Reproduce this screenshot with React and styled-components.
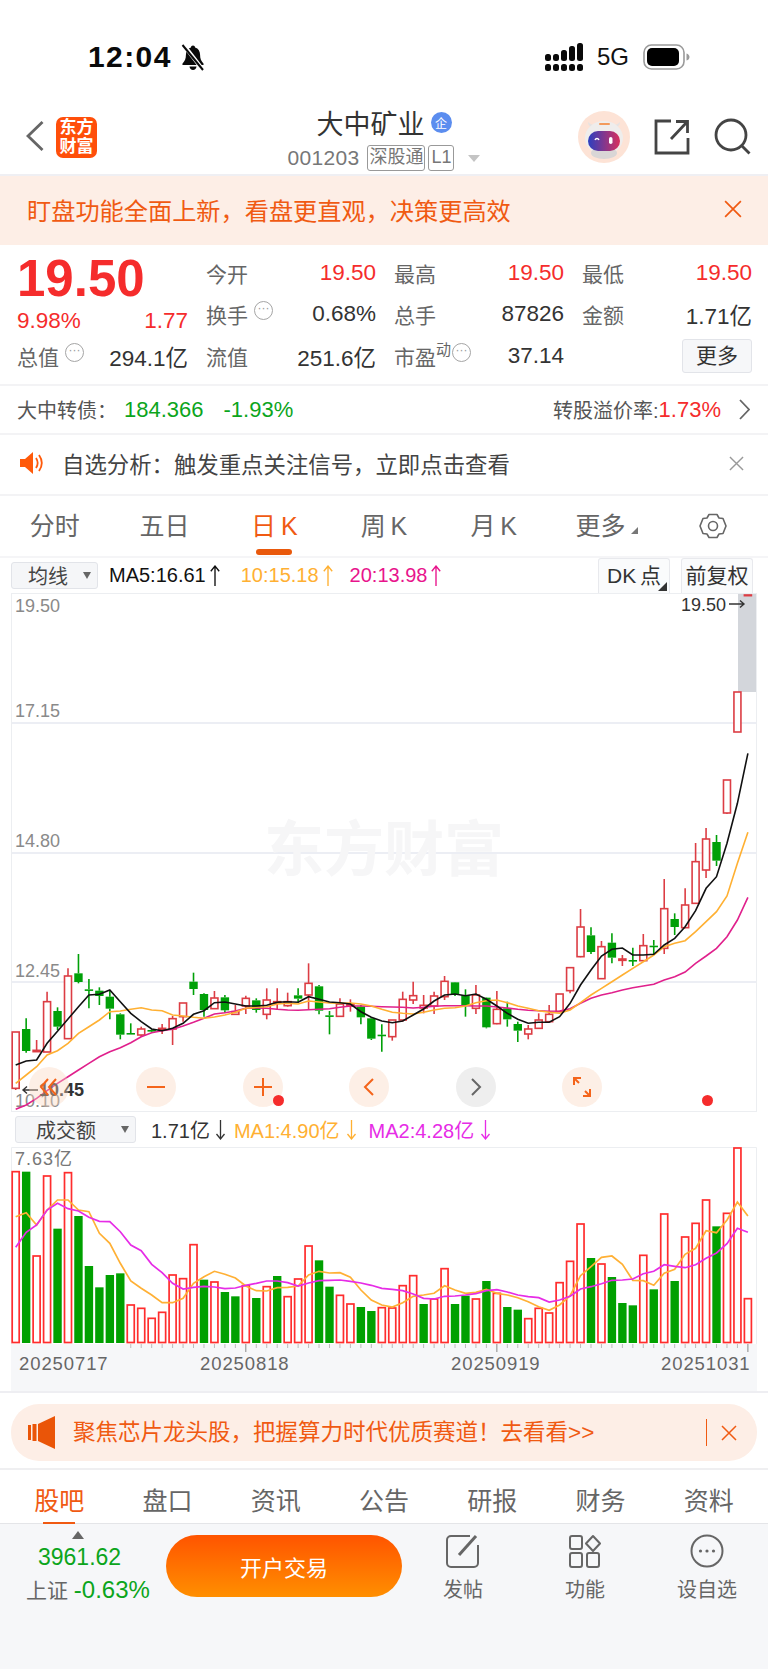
import React from 'react'
import styled, { createGlobalStyle } from 'styled-components'

const SANS = '"Liberation Sans", "Noto Sans CJK SC", sans-serif'
const RED = '#f52c2c'
const GREEN = '#0ca51c'
const ORANGE = '#f05a12'

const GlobalStyle = createGlobalStyle`
  html, body { margin: 0; padding: 0; background: #fff; }
  body { font-family: ${SANS}; width: 768px; height: 1669px; overflow: hidden; color: #333; }
  * { box-sizing: border-box; }
`

const Page = styled.div`
  width: 768px;
  height: 1669px;
  display: flex;
  flex-direction: column;
`

const StatusBar = styled.div`
  height: 104px;
  flex: none;
  display: flex;
  align-items: flex-start;
  justify-content: space-between;
  padding: 41px 78px 0 88px;
`
const StatusGroup = styled.div`
  display: flex;
  align-items: center;
  gap: ${p => p.$gap || 8}px;
  height: 32px;
`
const Clock = styled.span`
  font-size: 30px;
  font-weight: 700;
  letter-spacing: 1.4px;
  color: #0a0a0a;
`
const Net = styled.span`
  font-size: 24px;
  color: #111;
`

const Header = styled.div`
  height: 72px;
  flex: none;
  display: grid;
  grid-template-columns: 1fr 190px 1fr;
  border-bottom: 2px solid #efeff3;
`
const HeaderLeft = styled.div`
  display: flex;
  align-items: flex-start;
  gap: 12px;
  padding: 13px 0 0 26px;
`
const BackSlot = styled.span`
  margin-top: 4px;
`
const Logo = styled.div`
  width: 41px;
  height: 41px;
  margin-top: 0;
  border-radius: 7px;
  background: #ff4f0a;
  color: #fff;
  font-size: 17px;
  font-weight: 700;
  line-height: 19px;
  text-align: center;
  padding-top: 1px;
`
const HeaderCenter = styled.div`
  display: flex;
  flex-direction: column;
  align-items: center;
`
const TitleRow = styled.div`
  display: flex;
  align-items: center;
  gap: 6px;
  height: 36px;
  font-size: 27px;
  color: #333;
`
const QiBadge = styled.span`
  width: 21px;
  height: 21px;
  border-radius: 50%;
  background: #5b8def;
  color: #fff;
  font-size: 12px;
  display: flex;
  align-items: center;
  justify-content: center;
`
const CodeRow = styled.div`
  display: flex;
  align-items: center;
  gap: 3px;
  margin-top: 5px;
  font-size: 21px;
  color: #777;
  letter-spacing: 0.3px;
  white-space: nowrap;
`
const CodeTag = styled.span`
  flex: none;
  border: 1px solid #999;
  border-radius: 3px;
  font-size: 18px;
  line-height: 23px;
  height: 26px;
  padding: 0 ${p => p.$pad || 2}px;
  color: #777;
  letter-spacing: 0;
  margin-left: ${p => p.$ml || 0}px;
  white-space: nowrap;
`
const DownTri = styled.span`
  width: 0;
  height: 0;
  margin-left: 11px;
  border-left: 6px solid transparent;
  border-right: 6px solid transparent;
  border-top: 7px solid #c4c4c4;
`
const HeaderRight = styled.div`
  display: flex;
  align-items: flex-start;
  justify-content: flex-end;
  padding: 7px 17px 0 0;
`
const HeaderIcon = styled.span`
  margin: ${p => p.$top}px 0 0 ${p => p.$left}px;
`

const TopBanner = styled.div`
  height: 69px;
  flex: none;
  background: #fdeee6;
  color: ${ORANGE};
  font-size: 24.2px;
  display: flex;
  align-items: center;
  justify-content: space-between;
  padding: 0 26px 3px 27px;
`

const Stats = styled.div`
  height: 141px;
  flex: none;
  display: grid;
  grid-template-columns: 171px repeat(3, 170px);
  grid-template-rows: repeat(3, 41.5px);
  column-gap: 18px;
  padding: 7px 0 0 17px;
  border-bottom: 2px solid #f3f3f5;
`
const Price = styled.div`
  font-size: 51px;
  font-weight: 700;
  color: ${RED};
  line-height: 41px;
  margin-top: 6px;
`
const Cell = styled.div`
  display: flex;
  align-items: center;
  justify-content: space-between;
  font-size: 22.5px;
  padding-top: ${p => p.$drop || 0}px;
  color: ${p => p.$color || '#333'};
`
const Label = styled.span`
  display: flex;
  align-items: flex-start;
  color: #666;
  font-size: 21px;
`
const Sup = styled.span`
  font-size: 15px;
  margin-top: -3px;
`
const InfoDot = styled.span`
  width: 19px;
  height: 19px;
  margin: 2px 0 0 ${p => p.$ml ?? 6}px;
  border: 1.5px solid #a5a5a5;
  border-radius: 50%;
  color: #999;
  font-size: 12px;
  line-height: 12px;
  text-align: center;
`
const MoreBtn = styled.span`
  margin-left: auto;
  width: 70px;
  height: 34px;
  background: #f6f7f9;
  border: 1px solid #e2e4e9;
  border-radius: 3px;
  font-size: 21px;
  line-height: 32px;
  text-align: center;
  color: #333;
`

const InfoRow = styled.div`
  height: ${p => p.$h}px;
  flex: none;
  display: flex;
  align-items: center;
  border-bottom: 2px solid #f3f3f5;
  padding: 0 ${p => p.$right || 18}px ${p => p.$bottom || 0}px ${p => p.$left || 17}px;
  font-size: ${p => p.$size || 20}px;
  color: #555;
`
const Tinted = styled.span`
  color: ${p => p.$color};
  font-size: ${p => p.$size || 22}px;
  margin-left: ${p => p.$ml || 0}px;
`
const Push = styled.span`
  margin-left: auto;
  display: flex;
  align-items: center;
`
const ChevronSlot = styled.span`
  display: flex;
  margin-left: 18px;
`
const NoticeText = styled.span`
  margin-left: 19px;
  color: #444;
`

const PeriodTabs = styled.div`
  height: 62px;
  flex: none;
  display: grid;
  grid-template-columns: repeat(7, 1fr);
  align-items: center;
  border-bottom: 2px solid #f5f5f7;
`
const PeriodTab = styled.div`
  position: relative;
  text-align: center;
  font-size: 25px;
  height: 40px;
  line-height: 40px;
  word-spacing: -2px;
  left: ${p => p.$shift || 0}px;
  color: ${p => (p.$active ? ORANGE : '#666')};
  ${p =>
    p.$active &&
    `&::after {
      content: '';
      position: absolute;
      left: 50%;
      margin-left: -18px;
      bottom: -9px;
      width: 36px;
      height: 6px;
      border-radius: 3px;
      background: #e9590c;
    }`}
`
const CornerTri = styled.span`
  position: absolute;
  margin: 21px 0 0 6px;
  width: 0;
  height: 0;
  border-left: 7px solid transparent;
  border-bottom: 7px solid ${p => p.$color || '#777'};
`
const GearCell = styled.div`
  display: flex;
  justify-content: center;
`

const ChartBar = styled.div`
  height: 35px;
  flex: none;
  display: flex;
  align-items: ${p => p.$align || 'center'};
  padding: 0 15px 0 ${p => p.$left}px;
  font-size: 20px;
`
const SelectBox = styled.div`
  width: ${p => p.$w}px;
  height: 27px;
  flex: none;
  margin-top: ${p => p.$mt || 0}px;
  display: flex;
  align-items: center;
  justify-content: space-between;
  padding: 0 6px 0 ${p => p.$pl}px;
  background: #f5f6f8;
  border: 1px solid #e2e4e9;
  border-radius: 3px;
  color: #444;
  font-size: 20px;
`
const SelectTri = styled.span`
  width: 0;
  height: 0;
  border-left: 4.5px solid transparent;
  border-right: 4.5px solid transparent;
  border-top: 7px solid #666;
`
const MaText = styled.span`
  display: flex;
  align-items: center;
  gap: ${p => p.$gap || 3}px;
  color: ${p => p.$color};
  margin-left: ${p => p.$ml}px;
  margin-top: ${p => p.$mt || 0}px;
  white-space: nowrap;
`
const ToolBtn = styled.div`
  position: relative;
  width: 72px;
  height: 35px;
  flex: none;
  margin-left: ${p => p.$ml || 'auto'};
  background: #fafbfc;
  border: 1px solid #e8e9ed;
  border-bottom: none;
  border-radius: 3px 3px 0 0;
  font-size: 21px;
  line-height: 33px;
  text-align: center;
  word-spacing: -2px;
  color: #333;
  ${p => p.$corner && `&::after {
    content: '';
    position: absolute;
    right: 2px;
    bottom: 2px;
    border-left: 9px solid transparent;
    border-bottom: 9px solid #333;
  }`}
`

const ChartFrame = styled.div`
  position: relative;
  flex: none;
  width: 746px;
  height: ${p => p.$h}px;
  margin-left: 11px;
  svg { display: block; }
`
const Watermark = styled.div`
  position: absolute;
  left: 253px;
  top: 226px;
  font-size: 60px;
  font-weight: 700;
  line-height: 64px;
  color: #f6f6f7;
  white-space: nowrap;
`
const RoundBtn = styled.div`
  position: absolute;
  top: 474px;
  left: ${p => p.$x - 20 - 11}px;
  width: 40px;
  height: 40px;
  border-radius: 50%;
  background: ${p => (p.$gray ? '#eeeeee' : 'rgba(250, 212, 190, 0.38)')};
  display: flex;
  align-items: center;
  justify-content: center;
`
const RedDot = styled.div`
  position: absolute;
  top: 502px;
  left: ${p => p.$x - 5 - 11}px;
  width: 11px;
  height: 11px;
  border-radius: 50%;
  background: ${RED};
`

const AdWrap = styled.div`
  height: 79px;
  flex: none;
  padding: 11px 11px 9px;
  border-top: 2px solid #eeeef2;
  border-bottom: 2px solid #efeff1;
`
const AdBanner = styled.div`
  height: 57px;
  border-radius: 28px;
  background: #fdeee6;
  color: ${ORANGE};
  font-size: 22.5px;
  display: flex;
  align-items: center;
  padding: 0 20px 0 17px;
`
const AdText = styled.span`
  margin: -5px 0 0 18px;
  white-space: nowrap;
`
const AdSep = styled.span`
  margin-left: auto;
  width: 1px;
  height: 27px;
  background: ${ORANGE};
  margin-right: 14px;
`

const InfoTabs = styled.div`
  height: 54px;
  flex: none;
  display: grid;
  grid-template-columns: repeat(7, 1fr);
  padding: 0 5px;
  align-items: center;
  border-bottom: 1px solid #e4e5e8;
`
const InfoTab = styled.div`
  position: relative;
  text-align: center;
  font-size: 25px;
  line-height: 62px;
  height: 54px;
  color: ${p => (p.$active ? ORANGE : '#666')};
  ${p => p.$active && `&::after {
    content: '';
    position: absolute;
    left: 50%;
    margin-left: -16px;
    bottom: 0;
    width: 32px;
    height: 2px;
    background: ${ORANGE};
  }`}
`

const BottomBar = styled.div`
  flex: 1;
  background: #f6f7f9;
  display: flex;
  align-items: flex-start;
`
const IndexBox = styled.div`
  width: 166px;
  flex: none;
  padding: 7px 0 0 26px;
  position: relative;
`
const IndexTri = styled.div`
  width: 0;
  height: 0;
  margin-left: 46px;
  border-left: 6px solid transparent;
  border-right: 6px solid transparent;
  border-bottom: 8px solid #666;
`
const IndexValue = styled.div`
  color: ${GREEN};
  font-size: 23px;
  margin: 4px 0 0 12px;
  line-height: 28px;
`
const IndexLine = styled.div`
  margin-top: 4px;
  font-size: 21px;
  line-height: 30px;
  color: #666;
  white-space: nowrap;
`
const TradeBtn = styled.div`
  width: 236px;
  height: 62px;
  flex: none;
  margin-top: 11px;
  border-radius: 31px;
  background: linear-gradient(180deg, #ff5400 0%, #ff8f00 100%);
  color: #fff;
  font-size: 22px;
  display: flex;
  align-items: center;
  justify-content: center;
`
const Actions = styled.div`
  flex: 1;
  display: grid;
  grid-template-columns: repeat(3, 122px);
  padding-top: 10px;
`
const Action = styled.div`
  display: flex;
  flex-direction: column;
  align-items: center;
  font-size: 20px;
  color: #666;
  gap: 6px;
  svg { display: block; }
`

// k-line data, y values are read off the 3x chart crop (y = 880 + v / 3)
const py = v => 880 + v / 3
const vy = v => 1130 + v / 3
const cx = i => 15.7 + i * 10.46

const candles = [
  ['r', 456, 456, 625, 630], ['g', 415, 447, 513, 518], ['r', 480, 511, 515, 515], ['r', 335, 365, 516, 516],
  ['g', 382, 393, 440, 450], ['r', 265, 288, 476, 476], ['g', 222, 280, 306, 310], ['g', 297, 328, 330, 385],
  ['g', 322, 332, 348, 375], ['g', 330, 350, 386, 418], ['g', 400, 403, 464, 478], ['g', 430, 459, 463, 463],
  ['r', 440, 447, 465, 470], ['g', 448, 450, 452, 455], ['r', 432, 445, 449, 462], ['r', 408, 416, 447, 495],
  ['r', 369, 369, 410, 425], ['g', 278, 305, 327, 345], ['g', 340, 342, 390, 410], ['r', 333, 354, 386, 386],
  ['g', 345, 352, 391, 398], ['r', 375, 395, 403, 405], ['r', 347, 355, 378, 402], ['g', 355, 361, 390, 398],
  ['r', 325, 360, 403, 418], ['r', 325, 365, 369, 390], ['r', 338, 365, 377, 380], ['g', 325, 346, 356, 368],
  ['r', 250, 310, 345, 388], ['g', 315, 319, 392, 403], ['g', 393, 406, 408, 463], ['r', 355, 372, 409, 411],
  ['r', 358, 373, 378, 395], ['g', 375, 380, 412, 433], ['g', 412, 415, 476, 480], ['g', 433, 464, 468, 515],
  ['r', 420, 420, 470, 482], ['r', 335, 358, 420, 425], ['r', 305, 347, 360, 372], ['r', 345, 376, 384, 400],
  ['r', 335, 348, 378, 402], ['r', 288, 304, 350, 360], ['g', 306, 307, 345, 348], ['g', 328, 345, 375, 410],
  ['r', 315, 345, 385, 402], ['g', 352, 353, 442, 445], ['r', 333, 388, 431, 433], ['g', 365, 385, 418, 440],
  ['g', 425, 432, 452, 486], ['r', 435, 447, 462, 478], ['r', 400, 420, 445, 447], ['r', 375, 403, 425, 425],
  ['r', 342, 342, 395, 395], ['r', 263, 263, 332, 340], ['r', 87, 141, 230, 232], ['g', 142, 166, 216, 222],
  ['r', 183, 200, 296, 297], ['g', 160, 188, 233, 250], ['r', 225, 237, 241, 258], ['g', 203, 240, 243, 258],
  ['r', 162, 197, 242, 242], ['g', 180, 197, 199, 225], ['r', -3, 86, 205, 222], ['g', 100, 117, 141, 165],
  ['r', 25, 75, 143, 145], ['r', -111, -55, 70, 70], ['r', -156, -123, -30, -6], ['g', -135, -114, -58, -42],
  ['r', -300, -300, -201, -198], ['r', -564, -564, -444, -444], ['r', -855, -855, -853, -853],
]

const ma5 = [555, 543, 540, 490, 454, 417, 380, 345, 343, 330, 365, 400, 425, 447, 452, 445, 430, 403, 392, 368, 366, 372, 378, 378, 376, 367, 365, 367, 350, 358, 366, 368, 372, 395, 412, 423,
  428, 423, 405, 387, 363, 345, 342, 347, 342, 358, 378, 400, 418, 430, 427, 427, 410, 370, 315, 270, 228, 208, 204, 225, 225, 223, 195, 175, 140, 92, 25, -10, -110, -230, -380]
const ma10 = [610, 585, 560, 525, 512, 490, 460, 440, 420, 395, 393, 388, 383, 390, 392, 405, 408, 412, 415, 411, 405, 397, 385, 382, 380, 372, 370, 372, 363, 366, 369, 370, 369, 372, 378, 388,
  397, 400, 402, 397, 390, 385, 383, 378, 368, 362, 360, 368, 378, 385, 392, 397, 400, 390, 368, 345, 325, 305, 285, 265, 245, 225, 200, 190, 182, 155, 125, 95, 48, -50, -143]
const ma20 = [688, 675, 655, 632, 610, 590, 570, 550, 530, 515, 503, 488, 470, 458, 452, 448, 438, 427, 415, 402, 398, 393, 385, 384, 385, 388, 390, 391, 389, 388, 386, 382, 378, 378, 379, 380,
  381, 382, 384, 382, 379, 377, 377, 377, 378, 378, 381, 384, 388, 391, 392, 394, 393, 386, 370, 355, 345, 338, 330, 323, 318, 313, 300, 290, 276, 250, 228, 205, 170, 120, 52]

const volumes = [
  ['r', 125], ['g', 125], ['r', 378], ['r', 138], ['g', 296], ['r', 128], ['g', 258], ['g', 408], ['g', 472], ['g', 435], ['g', 430], ['r', 525],
  ['r', 535], ['r', 565], ['r', 547], ['r', 435], ['r', 446], ['r', 344], ['g', 449], ['r', 456], ['g', 486], ['g', 499], ['r', 467], ['g', 504],
  ['r', 470], ['g', 438], ['r', 500], ['r', 447], ['r', 348], ['g', 391], ['g', 470], ['r', 496], ['r', 522], ['g', 531], ['g', 543], ['r', 533],
  ['r', 534], ['r', 467], ['r', 437], ['g', 522], ['r', 507], ['r', 416], ['g', 522], ['g', 497], ['r', 507], ['g', 453], ['r', 490], ['g', 531],
  ['g', 539], ['r', 566], ['r', 535], ['r', 549], ['r', 458], ['r', 394], ['r', 282], ['g', 384], ['r', 402], ['g', 441], ['g', 519], ['g', 526],
  ['r', 376], ['g', 478], ['r', 252], ['g', 453], ['r', 321], ['r', 280], ['r', 210], ['g', 289], ['r', 250], ['r', 54], ['r', 506],
]
const vma1 = [260, 248, 285, 240, 210, 210, 240, 245, 310, 340, 400, 453, 475, 495, 518, 518, 505, 460, 440, 424, 433, 444, 468, 482, 483, 473, 472, 468, 435, 424, 429, 428, 442, 480, 510, 525,
  531, 518, 499, 495, 490, 467, 480, 490, 487, 478, 490, 495, 503, 515, 530, 541, 525, 497, 437, 410, 382, 378, 403, 451, 452, 466, 430, 418, 373, 355, 302, 308, 270, 216, 258]
const vma2 = [352, 307, 285, 240, 220, 236, 243, 262, 274, 275, 305, 345, 362, 403, 428, 460, 477, 472, 469, 471, 476, 474, 466, 460, 453, 453, 458, 468, 459, 452, 451, 450, 454, 459, 466, 475,
  478, 482, 492, 505, 507, 499, 498, 495, 491, 482, 479, 486, 495, 500, 503, 516, 510, 499, 477, 470, 461, 451, 450, 447, 431, 424, 404, 409, 413, 404, 385, 369, 341, 295, 307]

const linePts = (arr, conv) => arr.map((v, i) => `${cx(i).toFixed(1)},${conv(v).toFixed(1)}`).join(' ')

const KLine = () => (
  <svg width="746" height="519" viewBox="11 593 746 519">
    <rect x="738" y="593" width="19" height="99" fill="#d3d6db" />
    {[723, 853, 982].map(y => (
      <line key={y} x1="11" x2="757" y1={y} y2={y} stroke="#e6e9f0" strokeWidth="1.5" />
    ))}
    <rect x="11.5" y="593.5" width="745" height="518" fill="none" stroke="#eceef1" />
    <g fontFamily={SANS} fontSize="18" fill="#8a8a8a">
      <text x="15" y="612">19.50</text>
      <text x="15" y="717">17.15</text>
      <text x="15" y="847">14.80</text>
      <text x="15" y="977">12.45</text>
      <text x="15" y="1107">10.10</text>
    </g>
    {candles.map(([c, high, top, bottom, low], i) => {
      const color = c === 'r' ? '#dc3d44' : '#00a008'
      const x = cx(i)
      const t = py(top)
      const h = Math.max(py(bottom) - t, 0.5)
      return (
        <g key={i}>
          <line x1={x} x2={x} y1={py(high)} y2={t} stroke={color} strokeWidth="1.6" />
          <line x1={x} x2={x} y1={t + h} y2={py(low)} stroke={color} strokeWidth="1.6" />
          {c === 'r' ? (
            <rect x={x - 3.5} y={t} width="7" height={h} fill="#fff" stroke={color} strokeWidth="1.6" />
          ) : (
            <rect x={x - 4.2} y={t} width="8.4" height={Math.max(h, 1.6)} fill={color} />
          )}
        </g>
      )
    })}
    <polyline points={linePts(ma20, py)} fill="none" stroke="#e0208c" strokeWidth="1.6" />
    <polyline points={linePts(ma10, py)} fill="none" stroke="#ffb032" strokeWidth="1.6" />
    <polyline points={linePts(ma5, py)} fill="none" stroke="#111" strokeWidth="1.6" />
    <g fontFamily={SANS} fontSize="18" fill="#333">
      <text x="681" y="610.5">19.50</text>
      <path d="M729 604h15M740 600.5l4 3.500-4 3.500" fill="none" stroke="#333" strokeWidth="1.4" />
      <path d="M38 1090H23M27 1086.500l-4 3.500 4 3.500" fill="none" stroke="#333" strokeWidth="1.4" />
      <text x="39" y="1096" fontWeight="700">10.45</text>
    </g>
  </svg>
)

const Volume = () => {
  const dates = [['20250717', 19], ['20250818', 200], ['20250919', 451], ['20251031', 661]]
  return (
    <svg width="746" height="244" viewBox="11 1147 746 244">
      <rect x="11" y="1147" width="746" height="244" fill="#fff" />
      <rect x="11" y="1344" width="746" height="47" fill="#f6f7f9" />
      <path d="M11.500 1344V1147.500H756.500V1344" fill="none" stroke="#eceef1" />
      <text x="15" y="1165" fontFamily={SANS} fontSize="18" letterSpacing="1" fill="#777">7.63亿</text>
      {volumes.map(([c, top], i) => {
        const x = cx(i)
        const y = vy(top)
        return c === 'r' ? (
          <rect key={i} x={x - 3.5} y={y} width="7" height={1342.5 - y} fill="#fff" stroke="#ff2d2d" strokeWidth="1.7" />
        ) : (
          <rect key={i} x={x - 4.2} y={y} width="8.4" height={1343 - y} fill="#00a000" />
        )
      })}
      <polyline points={linePts(vma1, vy)} fill="none" stroke="#ffb035" strokeWidth="1.7" />
      <polyline points={linePts(vma2, vy)} fill="none" stroke="#e62ce6" strokeWidth="1.7" />
      {volumes.map((_, i) => {
        if (i < 11) return null
        const tall = i === 22 || i === 46 || i === 70
        return <line key={i} x1={cx(i)} x2={cx(i)} y1="1344" y2={tall ? 1352 : 1348} stroke={tall ? '#888' : '#bbb'} />
      })}
      <g fontFamily={SANS} fontSize="18.500" letterSpacing="0.900" fill="#666">
        {dates.map(([d, x]) => (
          <text key={d} x={x} y="1370">{d}</text>
        ))}
      </g>
    </svg>
  )
}

const RoundIcon = ({ d, color = '#f4641a' }) => (
  <svg width="24" height="24" viewBox="0 0 24 24" fill="none" stroke={color} strokeWidth="2" strokeLinejoin="miter">
    <path d={d} />
  </svg>
)

const CloseX = ({ color, size = 16 }) => (
  <svg width={size} height={size} viewBox="0 0 16 16" fill="none" stroke={color} strokeWidth="1.5">
    <path d="M1 1l14 14M15 1L1 15" />
  </svg>
)

// thin tall arrow next to the MA values
const MaArrow = ({ down, width = 10, height = 20 }) => (
  <svg width={width} height={height} viewBox="0 0 10 20" fill="none" stroke="currentColor" strokeWidth="1.3">
    {down ? <path d="M5 0v19M1 14l4 5 4-5" /> : <path d="M5 20V1M1 6l4-5 4 5" />}
  </svg>
)

const Signal = () => (
  <svg width="38" height="28" viewBox="0 0 38 28" fill="#0a0a0a">
    <rect x="0" y="11" width="6" height="7" rx="2.500" /><rect x="0" y="21" width="6" height="7" rx="2.500" />
    <rect x="8" y="11" width="6" height="7" rx="2.500" /><rect x="8" y="21" width="6" height="7" rx="2.500" />
    <rect x="16" y="7" width="6" height="11" rx="2.500" /><rect x="16" y="21" width="6" height="7" rx="2.500" />
    <rect x="24" y="3" width="6" height="15" rx="2.500" /><rect x="24" y="21" width="6" height="7" rx="2.500" />
    <rect x="32" y="0" width="6" height="18" rx="2.500" /><rect x="32" y="21" width="6" height="7" rx="2.500" />
  </svg>
)

const Battery = () => (
  <svg width="47" height="26" viewBox="0 0 47 26">
    <rect x="1" y="1" width="40" height="24" rx="7.500" fill="#fff" stroke="#9a9a9a" strokeWidth="1.6" />
    <rect x="4" y="4" width="32" height="18" rx="5" fill="#000" />
    <path d="M43.500 9.500c2 .5 3 2 3 3.500s-1 3-3 3.500z" fill="#9a9a9a" />
  </svg>
)

const BellSlash = () => (
  <svg width="26" height="27" viewBox="0 0 26 27">
    <path d="M13 1.500c-1.200 0-2 .8-2.100 2-3.400 1-5 3.900-5 7.500 0 3.800-1 5.900-3.300 8.500-.6.800-.2 1.500.8 1.500h19.200c1 0 1.400-.7.800-1.500-2.300-2.600-3.300-4.700-3.300-8.500 0-3.600-1.600-6.500-5-7.500-.1-1.200-.9-2-2.100-2z" fill="#0a0a0a" />
    <path d="M9.500 22.500c.2 2 1.600 3.500 3.500 3.500s3.300-1.500 3.500-3.500z" fill="#0a0a0a" />
    <path d="M3 0l20 26" stroke="#fff" strokeWidth="4" />
    <path d="M2.500 1l20.500 25" stroke="#0a0a0a" strokeWidth="2" />
  </svg>
)

const Robot = () => (
  <svg width="52" height="52" viewBox="0 0 52 52">
    <defs>
      <linearGradient id="visor" x1="0" x2="1" y1="0" y2="0">
        <stop offset="0" stopColor="#2b3fc0" />
        <stop offset="1" stopColor="#d9305c" />
      </linearGradient>
    </defs>
    <ellipse cx="26" cy="26" rx="26" ry="26" fill="#fde3d6" />
    <path d="M13 16c-2-1-3-3-3-5 2 2 4 3 6 3zM39 16c2-1 3-3 3-5-2 2-4 3-6 3z" fill="#e6e3e2" />
    <ellipse cx="26" cy="27" rx="19" ry="17" fill="#efedec" />
    <ellipse cx="26" cy="42" rx="13" ry="6" fill="#d9d6d6" />
    <rect x="21" y="12" width="11" height="2" rx="1" fill="#f39a5c" />
    <rect x="10" y="20" width="32" height="20" rx="10" fill="url(#visor)" />
    <path d="M17 29c1-2 3-2 4 0" stroke="#fff" strokeWidth="1.500" fill="none" />
    <rect x="31" y="26" width="3.500" height="7" rx="1.750" fill="#fff" />
  </svg>
)

const Speaker = () => (
  <svg width="23" height="24" viewBox="0 0 23 24">
    <path d="M0 8h5l8-7v22l-8-7H0z" fill="#ff5a0a" />
    <path d="M16 7c2 3 2 7 0 10M19 4c3.500 5 3.500 11 0 16" fill="none" stroke="#ff5a0a" strokeWidth="1.800" />
  </svg>
)

const Megaphone = () => (
  <svg width="27" height="33" viewBox="0 0 27 33" fill="#ea5508">
    <rect x="0" y="9" width="3" height="15" />
    <rect x="4.500" y="8" width="4" height="17" />
    <path d="M10 8L27 0v33L10 25z" />
  </svg>
)

const Back = () => (
  <svg width="18" height="30" viewBox="0 0 18 30" fill="none" stroke="#666" strokeWidth="2.800">
    <path d="M16.500 1L2 15l14.500 14" />
  </svg>
)
const Share = () => (
  <svg width="36" height="36" viewBox="0 0 36 36" fill="none" stroke="#444" strokeWidth="2.800">
    <path d="M17 2H2v32h32V19" />
    <path d="M17 20L33 3M22 2.500h11.500V14" />
  </svg>
)
const Search = () => (
  <svg width="37" height="37" viewBox="0 0 37 37" fill="none" stroke="#444" strokeWidth="2.800">
    <circle cx="17" cy="17" r="15" />
    <path d="M28 28l7.500 7.500" />
  </svg>
)
const Chevron = () => (
  <svg width="11" height="21" viewBox="0 0 11 21" fill="none" stroke="#666" strokeWidth="1.800">
    <path d="M1 1l9 9.500L1 20" />
  </svg>
)
const Gear = () => (
  <svg width="28" height="28" viewBox="0 0 28 28" fill="none" stroke="#666" strokeWidth="1.600">
    <path d="M10 2.500h8l2 3.500 4 .5 3 7.500-3 7.500-4 .5-2 3.500h-8l-2-3.500-4-.5-3-7.500 3-7.500 4-.5z" strokeLinejoin="round" />
    <circle cx="14" cy="14" r="4.500" />
  </svg>
)
const PostIcon = () => (
  <svg width="34" height="34" viewBox="0 0 34 34" fill="none" stroke="#666" strokeWidth="2">
    <path d="M24 2H5a4 4 0 0 0-4 4v23a4 4 0 0 0 4 4h23a4 4 0 0 0 4-4V11" />
    <path d="M13 21L30 2" strokeWidth="3" />
  </svg>
)
const FuncIcon = () => (
  <svg width="32" height="34" viewBox="0 0 32 34" fill="none" stroke="#666" strokeWidth="2">
    <rect x="1" y="2" width="12" height="13" rx="2" />
    <path d="M24 2l7 7.500-7 7.500-7-7.500z" strokeLinejoin="round" />
    <rect x="1" y="19" width="12" height="14" rx="2" />
    <rect x="18" y="19" width="12" height="14" rx="2" />
  </svg>
)
const MoreIcon = () => (
  <svg width="34" height="34" viewBox="0 0 34 34" fill="none">
    <circle cx="17" cy="17" r="15.500" stroke="#666" strokeWidth="2" />
    <circle cx="10.500" cy="17" r="1.600" fill="#666" />
    <circle cx="17" cy="17" r="1.600" fill="#666" />
    <circle cx="23.500" cy="17" r="1.600" fill="#666" />
  </svg>
)

const Stat = ({ label, value, color, dot, sup }) => (
  <Cell $color={color}>
    <Label>
      {label}
      {sup && <Sup>{sup}</Sup>}
      {dot && <InfoDot $ml={sup ? 1 : 6}>···</InfoDot>}
    </Label>
    <span>{value}</span>
  </Cell>
)

export default function App() {
  return (
    <Page>
      <GlobalStyle />
      <StatusBar>
        <StatusGroup $gap={8}>
          <Clock>12:04</Clock>
          <BellSlash />
        </StatusGroup>
        <StatusGroup $gap={14}>
          <Signal />
          <Net>5G</Net>
          <Battery />
        </StatusGroup>
      </StatusBar>

      <Header>
        <HeaderLeft>
          <BackSlot><Back /></BackSlot>
          <Logo>东方<br />财富</Logo>
        </HeaderLeft>
        <HeaderCenter>
          <TitleRow>
            <span>大中矿业</span>
            <QiBadge>企</QiBadge>
          </TitleRow>
          <CodeRow>
            <span>001203</span>
            <CodeTag $ml={5} $pad={1}>深股通</CodeTag>
            <CodeTag>L1</CodeTag>
            <DownTri />
          </CodeRow>
        </HeaderCenter>
        <HeaderRight>
          <Robot />
          <HeaderIcon $top={8} $left={24}><Share /></HeaderIcon>
          <HeaderIcon $top={7} $left={24}><Search /></HeaderIcon>
        </HeaderRight>
      </Header>

      <TopBanner>
        <span>盯盘功能全面上新，看盘更直观，决策更高效</span>
        <CloseX color={ORANGE} size={18} />
      </TopBanner>

      <Stats>
        <Price>19.50</Price>
        <Stat label="今开" value="19.50" color={RED} />
        <Stat label="最高" value="19.50" color={RED} />
        <Stat label="最低" value="19.50" color={RED} />
        <Cell $color={RED} $drop={13}><span>9.98%</span><span>1.77</span></Cell>
        <Stat label="换手" value="0.68%" dot />
        <Stat label="总手" value="87826" />
        <Stat label="金额" value="1.71亿" />
        <Stat label="总值" value="294.1亿" dot />
        <Stat label="流值" value="251.6亿" />
        <Stat label="市盈" sup="动" value="37.14" dot />
        <Cell><MoreBtn>更多</MoreBtn></Cell>
      </Stats>

      <InfoRow $h={49}>
        <span>大中转债：</span>
        <Tinted $color={GREEN} $ml={7}>184.366</Tinted>
        <Tinted $color={GREEN} $ml={20}>-1.93%</Tinted>
        <Push>
          转股溢价率:<Tinted $color={RED}>1.73%</Tinted>
          <ChevronSlot><Chevron /></ChevronSlot>
        </Push>
      </InfoRow>

      <InfoRow $h={61} $left={20} $right={24} $size={22.4} $bottom={3}>
        <Speaker />
        <NoticeText>自选分析：触发重点关注信号，立即点击查看</NoticeText>
        <Push><CloseX color="#999" size={15} /></Push>
      </InfoRow>

      <PeriodTabs>
        <PeriodTab>分时</PeriodTab>
        <PeriodTab>五日</PeriodTab>
        <PeriodTab $active>日 K</PeriodTab>
        <PeriodTab>周 K</PeriodTab>
        <PeriodTab>月 K</PeriodTab>
        <PeriodTab $shift={-3}>更多<CornerTri /></PeriodTab>
        <GearCell><Gear /></GearCell>
      </PeriodTabs>

      <ChartBar $left={11} $align="flex-start">
        <SelectBox $w={87} $pl={16} $mt={4}>均线<SelectTri /></SelectBox>
        <MaText $color="#111" $ml={11} $mt={6}>MA5:16.61<MaArrow width={12} height={21} /></MaText>
        <MaText $color="#ffb032" $ml={20} $mt={6}>10:15.18<MaArrow width={12} height={21} /></MaText>
        <MaText $color="#e8148c" $ml={16} $mt={6}>20:13.98<MaArrow width={12} height={21} /></MaText>
        <ToolBtn $corner>DK 点</ToolBtn>
        <ToolBtn $ml="11px">前复权</ToolBtn>
      </ChartBar>

      <ChartFrame $h={519}>
        <KLine />
        <Watermark>东方财富</Watermark>
        <RoundBtn $x={49}><RoundIcon d="M11 4l-7 8 7 8M19 4l-7 8 7 8" /></RoundBtn>
        <RoundBtn $x={156}><RoundIcon d="M3 12h18" /></RoundBtn>
        <RoundBtn $x={263}><RoundIcon d="M3 12h18M12 3v18" /></RoundBtn>
        <RoundBtn $x={369}><RoundIcon d="M16 4l-8 8 8 8" /></RoundBtn>
        <RoundBtn $x={476} $gray><RoundIcon d="M8 4l8 8-8 8" color="#666" /></RoundBtn>
        <RoundBtn $x={582}><RoundIcon d="M4 10V3h7M4 3l5 5M20 14v7h-7M20 21l-5-5" /></RoundBtn>
        <RedDot $x={278} />
        <RedDot $x={707} />
      </ChartFrame>

      <ChartBar $left={15}>
        <SelectBox $w={121} $pl={20}>成交额<SelectTri /></SelectBox>
        <MaText $color="#333" $ml={15} $gap={5}>1.71亿<MaArrow down width={11} /></MaText>
        <MaText $color="#ffb032" $ml={8} $gap={6}>MA1:4.90亿<MaArrow down width={11} /></MaText>
        <MaText $color="#e62ce6" $ml={12} $gap={6}>MA2:4.28亿<MaArrow down width={11} /></MaText>
      </ChartBar>

      <ChartFrame $h={244}>
        <Volume />
      </ChartFrame>

      <AdWrap>
        <AdBanner>
          <Megaphone />
          <AdText>聚焦芯片龙头股，把握算力时代优质赛道！去看看&gt;&gt;</AdText>
          <AdSep />
          <CloseX color={ORANGE} />
        </AdBanner>
      </AdWrap>

      <InfoTabs>
        <InfoTab $active>股吧</InfoTab>
        <InfoTab>盘口</InfoTab>
        <InfoTab>资讯</InfoTab>
        <InfoTab>公告</InfoTab>
        <InfoTab>研报</InfoTab>
        <InfoTab>财务</InfoTab>
        <InfoTab>资料</InfoTab>
      </InfoTabs>

      <BottomBar>
        <IndexBox>
          <IndexTri />
          <IndexValue>3961.62</IndexValue>
          <IndexLine>上证 <Tinted $color={GREEN} $size={24}>-0.63%</Tinted></IndexLine>
        </IndexBox>
        <TradeBtn>开户交易</TradeBtn>
        <Actions>
          <Action><PostIcon />发帖</Action>
          <Action><FuncIcon />功能</Action>
          <Action><MoreIcon />设自选</Action>
        </Actions>
      </BottomBar>
    </Page>
  )
}
